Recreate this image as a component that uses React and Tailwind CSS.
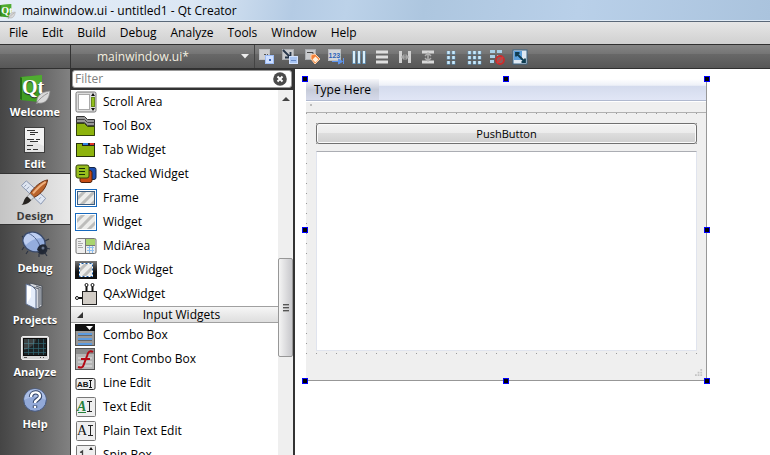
import React from "react";

const TOOLS = ["hlayoutSplit", "signals", "buddy", "tab", "horizontal", "vertical", "hsplit", "vsplit", "form", "grid", "break", "adjust"];
const TOOL_NAMES = ["Edit Widgets", "Edit Signals/Slots", "Edit Buddies", "Edit Tab Order", "Lay Out Horizontally", "Lay Out Vertically", "Horizontal Splitter", "Vertical Splitter", "Form Layout", "Grid Layout", "Break Layout", "Adjust Size"];

function Page({ x, y }) {
  return <rect x={x} y={y} width="9" height="9" fill="#d3d5d8" stroke="#b2b5ba" />;
}

function ToolIcon({ kind }) {
  const shapes = {
    hlayoutSplit: (
      <>
        <rect x=".5" y=".5" width="10" height="10" fill="#cfd0d2" stroke="#bfc1c4" />
        <path d="M7 5.500H5M8.500 5v3" stroke="#555" />
        <rect x="6.500" y="6.500" width="8" height="8" fill="#cfe0ff" stroke="#9dbcf5" />
        <rect x="10" y="10" width="2" height="2" fill="#3862b4" />
      </>
    ),
    signals: (
      <>
        <rect x=".5" y=".5" width="11" height="10" fill="#c8cacd" stroke="#aaadb1" />
        <path d="M1 1l7 7M8.500 3v5.500H3" stroke="#26364a" strokeWidth="1.800" fill="none" />
        <rect x="7.500" y="7.500" width="8" height="7" fill="#a9c5f2" stroke="#d2e2ff" />
        <path d="M9 11.500h5" stroke="#6589c8" />
      </>
    ),
    buddy: (
      <>
        <rect x=".5" y=".5" width="10" height="10" fill="#c8cacd" stroke="#aaadb1" />
        <path d="M2 3.500h6V7" stroke="#444" fill="none" />
        <path d="M6 6l4-1 5 5-5 5-4-5z" fill="#f58239" stroke="#ffd0a8" />
        <path d="M10.500 7.500l3 3-3 3-3-3z" fill="#fff1dc" />
      </>
    ),
    tab: (
      <>
        <rect x=".5" y=".5" width="12" height="11" fill="#d3d6da" stroke="#b9bcc1" />
        <text x=".5" y="9" fontSize="7" fontWeight="700" fill="#2b62b8" fontFamily="Liberation Sans, sans-serif">123</text>
        <path d="M4 12.500h7M10.500 10l4 2.500-4 2.500zM15.500 9v6" stroke="#5f94ea" fill="#5f94ea" />
      </>
    ),
    horizontal: (
      <>
        <path d="M3 2v13M8 2v13M13 2v13" stroke="#6ba4cf" strokeWidth="3" />
        <path d="M3 2v12M8 2v12M13 2v12" stroke="#d8eefa" strokeWidth="2" />
      </>
    ),
    vertical: <path d="M2 3h12M2 8h12M2 13h12" stroke="#dedede" strokeWidth="3" />,
    hsplit: (
      <>
        <path d="M3.500 2v12M12.500 2v12" stroke="#d0d0d0" strokeWidth="3" />
        <path d="M5 8h6M7.500 5.500L5 8l2.500 2.500M8.500 5.500L11 8l-2.500 2.500" stroke="#a5a5a5" fill="none" strokeWidth="1.500" />
      </>
    ),
    vsplit: (
      <>
        <path d="M2 3h12M2 13h12" stroke="#d8d8d8" strokeWidth="3" />
        <path d="M8 5v6M5 7l3-3 3 3M5 9l3 3 3-3" stroke="#b0b0b0" fill="none" strokeWidth="1.500" />
      </>
    ),
    form: (
      <>
        <path d="M5.500 2v3.500M5.500 7v3.500M5.500 12v3.500M10.500 2v3.500M10.500 7v3.500M10.500 12v3.500" stroke="#5f9ac6" strokeWidth="3.500" />
        <path d="M5.500 2v3M5.500 7v3M5.500 12v3M10.500 2v3M10.500 7v3M10.500 12v3" stroke="#cbe8f8" strokeWidth="2.500" />
      </>
    ),
    grid: (
      <>
        <path d="M3.500 2v3.500M3.500 7v3.500M3.500 12v3.500M8.500 2v3.500M8.500 7v3.500M8.500 12v3.500M13.500 2v3.500M13.500 7v3.500M13.500 12v3.500" stroke="#5f9ac6" strokeWidth="3.500" />
        <path d="M3.500 2v3M3.500 7v3M3.500 12v3M8.500 2v3M8.500 7v3M8.500 12v3M13.500 2v3M13.500 7v3M13.500 12v3" stroke="#cbe8f8" strokeWidth="2.500" />
      </>
    ),
    break: (
      <>
        <path d="M1 2.500h5M8 2.500h5M1 7.500h5M8 7.500h3M1 12.500h4" stroke="#a9d0e8" strokeWidth="3" />
        <circle cx="11" cy="11" r="4" fill="#8a6060" stroke="#c92c2c" strokeWidth="1.800" />
        <path d="M8 14l6-6" stroke="#d23c3c" strokeWidth="1.800" />
      </>
    ),
    adjust: (
      <>
        <rect x="1" y="1" width="14" height="14" fill="#dfe9f3" stroke="#3d6786" />
        <path d="M2 2h8v9H2z" fill="#5ba0dc" />
        <path d="M4 4l9 9M4 7.500V4h3.500M13 9.500V13H9.500" stroke="#0f3c50" strokeWidth="1.800" fill="none" />
      </>
    ),
  };
  return (
    <svg viewBox="0 0 16 16" className="size-4" aria-hidden="true">
      {shapes[kind]}
    </svg>
  );
}

function QtLogo() {
  return (
    <>
      <path d="M3 5l22-2v26l-3 1-19-2z" fill="#3f9e24" />
      <path d="M3 5l2 1v22l-2-1z" fill="#246b15" />
      <path d="M5 5l20-2v14L5 20z" fill="#5cb83a" opacity=".55" />
      <text x="5" y="22" fontSize="20" fontWeight="700" fill="#fff" fontFamily="Liberation Serif, serif">Qt</text>
      <path d="M20 31c-1-7 4-11 13-12-1 8-4 13-12 12l-2 1z" fill="#d9d9d9" stroke="#8c8c8c" strokeWidth=".7" />
      <path d="M19 32c3-5 7-8 12-11" stroke="#888" fill="none" strokeWidth=".8" />
    </>
  );
}

function ModeIcon({ kind }) {
  const shapes = {
    Welcome: <QtLogo />,
    Edit: (
      <>
        <rect x="7.500" y="3.500" width="20" height="25" fill="#f3f3f3" stroke="#3e3e3e" />
        <path d="M8 28V14l19 8v6z" fill="#dcdcdc" opacity=".6" />
        <path d="M10 6.500h8M13 8.500h8M13 10.500h5M10 15.500h7M19 15.500h4M13 17.500h8M10 21.500h6M10 25.500h4M16 25.500h5" stroke="#333" />
      </>
    ),
    Design: (
      <>
        <path d="M4 9l5-5 20 18-5 6z" fill="#dfe6f2" stroke="#8795b0" />
        <path d="M9 8l-2 2M12 10l-3 3M15 13l-2 2M18 16l-2 2M21 18l-3 3M24 21l-2 2" stroke="#8f9cb3" />
        <path d="M31 3c-6 1-14 7-18 14l4 4C24 18 30 11 31 3z" fill="#b9622a" stroke="#673014" />
        <path d="M29 5c-5 3-9 7-13 12" stroke="#eeb07e" strokeWidth="2" fill="none" />
        <path d="M13 17l4 4-3 3-4-4z" fill="#d7d9dc" stroke="#777" strokeWidth=".7" />
        <path d="M10 20l4 4c-3 4-6 4-10 5 3-2 2-7 6-9z" fill="#26221f" />
      </>
    ),
    Debug: (
      <>
        <path d="M7 19l-2 3M11 23l-2 3M28 13l4-2M29 20l4 1M7 10L5 8M28 25l2 3M22 26v3" stroke="#2d3443" strokeWidth="1.200" />
        <ellipse cx="25" cy="21" rx="5.500" ry="5.500" fill="#252c39" />
        <ellipse cx="17" cy="14" rx="11.500" ry="9.500" transform="rotate(25 17 14)" fill="#94addd" stroke="#3a4a6a" strokeWidth="1.300" />
        <path d="M7 10c4-7 12-7 18 0-7 0-12 3-16 7-2-2-3-5-2-7z" fill="#cbdaf7" opacity=".75" />
        <path d="M11 5c7 3 11 9 13 16" stroke="#536894" fill="none" />
        <path d="M20 22c1-5 5-7 9-5v5l-4 4z" fill="#202734" />
        <circle cx="26" cy="20" r="1.500" fill="#68758d" />
      </>
    ),
    Projects: (
      <>
        <path d="M13 3l12 3v20l-5 3-7-3z" fill="#d4d6db" stroke="#4b5059" />
        <path d="M16 7l6 2v18M19 6l5 2v17" fill="none" stroke="#636a76" strokeWidth="1.200" />
        <path d="M9 4l6 2 4 4v19L9 24z" fill="#e5edfb" stroke="#5c6c8b" />
        <path d="M10 6l4 1v10l-4 6z" fill="#fff" />
      </>
    ),
    Analyze: (
      <>
        <rect x="4.500" y="4.500" width="27" height="23" rx="1.500" fill="#d6d6d6" stroke="#eee" />
        <rect x="6.500" y="6.500" width="23" height="17" fill="#1a2022" stroke="#090909" />
        <path d="M11.500 7v16M16.500 7v16M21.500 7v16M26.500 7v16M7 11.500h22M7 16.500h22M7 20.500h22" stroke="#316772" strokeWidth=".7" />
        <path d="M7 7h12c-1 6-6 9-12 11z" fill="#fff" opacity=".15" />
        <path d="M23 25.500h1M26 25.500h1M7 25.500h3" stroke="#555" />
      </>
    ),
    Help: (
      <>
        <circle cx="18" cy="16" r="11.300" fill="#92a9d8" stroke="#47597f" />
        <path d="M7 16a11 11 0 0 1 22 0c-8-4-14-4-22 0z" fill="#b9c9ec" opacity=".65" />
        <path d="M14 13c0-6 9-6 9-1 0 4-5 3-5 7M18 21.500v2.500" stroke="#334568" strokeWidth="4.400" fill="none" />
        <path d="M14 13c0-6 9-6 9-1 0 4-5 3-5 7M18 22v2" stroke="#fff" strokeWidth="2.400" fill="none" />
      </>
    ),
  };
  return (
    <svg viewBox="0 0 36 32" className="h-8 w-9" aria-hidden="true">
      {shapes[kind]}
    </svg>
  );
}

const MODES = ["Welcome", "Edit", "Design", "Debug", "Projects", "Analyze", "Help"];

function Stripes({ x, y, w, h }) {
  return (
    <svg x={x} y={y} width={w} height={h} viewBox={`0 0 ${w} ${h}`}>
      <rect width={w} height={h} fill="#ededeb" />
      <path d="M-4 10L8-2M-1 17L18-2M8 18L26 0" stroke="#bdbdbb" strokeWidth="3" />
    </svg>
  );
}

function WidgetIcon({ kind }) {
  const shapes = {
    "Scroll Area": (
      <>
        <rect x="1" y="1" width="20" height="20" rx="1.500" fill="#dedede" stroke="#777" />
        <rect x="3.500" y="3.500" width="11" height="15" fill="#fff" stroke="#aaa" />
        <path d="M18 2l2 3h-4zM18 20l2-3h-4z" fill="#111" />
        <rect x="16.500" y="6.500" width="3" height="9" fill="#92bf1d" stroke="#668a18" />
      </>
    ),
    "Tool Box": (
      <>
        <path d="M1.500 1.500h8l3 3h7v16h-18z" fill="#999" stroke="#333" />
        <path d="M1.500 4.500h8l3 3h7M1.500 7.500h8l3 3h7" stroke="#444" fill="none" />
        <path d="M1.500 8.500h8l3 3h7v9h-18z" fill="#8db30d" stroke="#33430b" />
      </>
    ),
    "Tab Widget": (
      <>
        <rect x="1.500" y="4.500" width="18" height="13" fill="#8db30d" stroke="#26330a" />
        <path d="M7 4h13v3H7z" fill="#222" />
        <path d="M8 4h5v2H8z" fill="#2f86e4" />
        <path d="M15 4h4v2h-4z" fill="#e23529" />
      </>
    ),
    "Stacked Widget": (
      <>
        <rect x="9" y="4.500" width="12" height="12" rx="2" fill="#1c4eb0" stroke="#172646" />
        <rect x="5" y="7.500" width="12" height="12" rx="2" fill="#c84c13" stroke="#4b210d" />
        <rect x="1" y="2" width="13" height="13" rx="2" fill="#97bd1d" stroke="#34430d" />
        <path d="M4 5.500h6M4 8.500h6M4 11.500h6" stroke="#172f08" />
      </>
    ),
    Frame: (
      <>
        <rect x=".5" y="2.500" width="21" height="17" fill="#fff" stroke="#1769bd" />
        <Stripes x={3} y={5} w={16} h={12} />
        <rect x="2.500" y="4.500" width="17" height="13" fill="none" stroke="#3d5e81" />
      </>
    ),
    Widget: (
      <>
        <rect x=".5" y="2.500" width="21" height="17" fill="#fff" stroke="#1769bd" />
        <Stripes x={2} y={4} w={18} h={14} />
      </>
    ),
    MdiArea: (
      <>
        <rect x="1" y="3.500" width="20" height="15" rx="1.500" fill="#eee" stroke="#777" />
        <path d="M10.500 4v14M11 10.500h9" stroke="#777" />
        <rect x="11" y="4" width="9" height="6" fill="#a9d46e" />
        <path d="M3 6.500h3M3 8.500h5M3 10.500h4M3 12.500h5" stroke="#aaa" />
        <path d="M12 12.500h7M12 15.500h7M14.500 11v7M17.500 11v7" stroke="#8dbff0" />
      </>
    ),
    "Dock Widget": (
      <>
        <defs>
          <linearGradient id="dock" x2="0" y2="1"><stop stopColor="#777" /><stop offset=".6" stopColor="#111" /></linearGradient>
        </defs>
        <rect y="2" width="22" height="18" fill="url(#dock)" />
        <Stripes x={5} y={5} w={12} h={12} />
        <rect x="4.500" y="4.500" width="13" height="13" fill="none" stroke="#175aa5" />
        <rect x="4.500" y="4.500" width="13" height="13" fill="none" stroke="#fff" strokeDasharray="2 2" />
      </>
    ),
    QAxWidget: (
      <>
        <rect x="7.500" y="8.500" width="14" height="13" fill="#d2cdc6" stroke="#222" />
        <path d="M11.500 3v5M17.500 3v5M3 15h4" stroke="#111" strokeWidth="2" />
        <circle cx="11.500" cy="2" r="1.500" fill="#fff" stroke="#111" />
        <circle cx="17.500" cy="2" r="1.500" fill="#fff" stroke="#111" />
        <circle cx="2" cy="15" r="1.500" fill="#fff" stroke="#111" />
      </>
    ),
    "Combo Box": (
      <>
        <rect x=".5" y=".5" width="19" height="21" fill="#999" stroke="#555" />
        <path d="M0 0h20v7H0z" fill="#111" />
        <path d="M11 2h7l-3.500 4z" fill="#fff" />
        <path d="M3 10h14M3 15h14M3 20h14" stroke="#5c9be0" strokeWidth="2" />
        <path d="M3 11.500h14M3 16.500h14" stroke="#666" />
      </>
    ),
    "Font Combo Box": (
      <>
        <rect x=".5" y=".5" width="19" height="21" fill="#b4b4b4" stroke="#555" />
        <path d="M1 1h18v5H1z" fill="#8a8a8a" />
        <path d="M3 10h14M3 14h14M3 18h14" stroke="#ccc" strokeWidth="2" />
        <path d="M18 4c-3-2-5 0-6 4L9 16c-1 4-3 4-6 3M6 11h9" stroke="#b30914" strokeWidth="2" fill="none" />
      </>
    ),
    "Line Edit": (
      <>
        <rect x="1" y="6.500" width="19" height="11" rx="1.500" fill="#eee" stroke="#333" />
        <text x="2" y="15" fontSize="8" fontWeight="700" fill="#111" fontFamily="Liberation Sans, sans-serif">AB</text>
        <path d="M14 8.500h3M14 15.500h3M15.500 9v6" stroke="#111" />
      </>
    ),
    "Text Edit": (
      <>
        <rect x="1.500" y="1.500" width="19" height="19" rx="1" fill="#eee" stroke="#777" />
        <text x="2" y="15" fontSize="14" fontStyle="italic" fontWeight="700" fill="#24803a" fontFamily="Liberation Serif, serif">A</text>
        <path d="M3 16.500h8" stroke="#24803a" />
        <path d="M12 5.500h5M12 15.500h5M14.500 6v9" stroke="#222" />
      </>
    ),
    "Plain Text Edit": (
      <>
        <rect x="1.500" y="1.500" width="19" height="19" rx="1" fill="#eee" stroke="#777" />
        <text x="2" y="15" fontSize="14" fill="#111" fontFamily="Liberation Serif, serif">A</text>
        <path d="M13 5.500h5M13 15.500h5M15.500 6v9" stroke="#222" />
      </>
    ),
    "Spin Box": (
      <>
        <rect x="1.500" y="1.500" width="19" height="19" rx="1" fill="#eee" stroke="#777" />
        <path d="M5 8.500l2.500-1.500v8M5 15h5" stroke="#444" strokeWidth="1.300" fill="none" />
        <path d="M16 3l2 3h-4zM16 18l2-3h-4z" fill="#111" />
      </>
    ),
  };
  return (
    <svg viewBox="0 0 22 22" className="size-[22px] shrink-0" aria-hidden="true">
      {shapes[kind]}
    </svg>
  );
}

const CONTAINERS = ["Scroll Area", "Tool Box", "Tab Widget", "Stacked Widget", "Frame", "Widget", "MdiArea", "Dock Widget", "QAxWidget"];
const INPUTS = ["Combo Box", "Font Combo Box", "Line Edit", "Text Edit", "Plain Text Edit", "Spin Box"];

function WidgetRows({ items }) {
  return (
    <ul>
      {items.map((name) => (
        <li key={name} className="flex h-6 items-center gap-1.5 pl-1">
          <WidgetIcon kind={name} />
          <span className="whitespace-nowrap">{name}</span>
        </li>
      ))}
    </ul>
  );
}

function Handle({ className }) {
  return <span className={`absolute size-1.5 -translate-1/2 border border-[#0000ff] bg-black ${className}`} />;
}

function TitleBar() {
  return (
    <header className="flex h-[22px] shrink-0 items-center gap-1.5 border-b border-[#5a6878] bg-[linear-gradient(100deg,#e4edf7_0%,#dbe7f4_25%,#b4cbe4_38%,#bcd2e9_45%,#adc6df_55%,#b9d0e9_75%,#aac3dd_100%)] shadow-[inset_0_-1px_#dfeaf5]">
      <svg viewBox="3 1 31 32" className="size-4" aria-hidden="true"><QtLogo /></svg>
      <h1>mainwindow.ui - untitled1 - Qt Creator</h1>
    </header>
  );
}

function MenuBar() {
  return (
    <nav className="flex h-[22px] shrink-0 items-center gap-3.5 bg-linear-to-b from-[#e6e6e6] to-[#d0d0d0] pl-[9px]">
      {["File", "Edit", "Build", "Debug", "Analyze", "Tools", "Window", "Help"].map((m) => (
        <button key={m}>{m}</button>
      ))}
    </nav>
  );
}

function ToolBar() {
  return (
    <div className="flex h-[25px] shrink-0 border-y border-[#303030] bg-[linear-gradient(#848484,#747474_40%,#686868_40%,#575757)]">
      <div className="w-[71px] shrink-0 border-r border-[#333]" />
      <button className="flex w-[184px] shrink-0 items-center justify-between border-r border-[#444] pr-[5px] pl-[26px] text-[#f3efe0]">
        mainwindow.ui*
        <svg viewBox="0 0 8 5" className="h-[5px] w-2" aria-hidden="true"><path d="M0 0h8L4 4.500z" fill="#eee" /></svg>
      </button>
      <div className="flex items-center">
        {TOOLS.map((t, i) => (
          <button key={t} aria-label={TOOL_NAMES[i]} className="flex w-[23px] justify-center">
            <ToolIcon kind={t} />
          </button>
        ))}
      </div>
    </div>
  );
}

function ModeBar() {
  return (
    <aside className="flex w-[71px] shrink-0 flex-col border-r border-[#333] bg-linear-to-r from-[#454545] to-[#818181]">
      {MODES.map((m) => (
        <button
          key={m}
          className={
            m === "Design"
              ? "flex h-[52px] shrink-0 flex-col items-center border-y border-[#333] bg-linear-to-r from-[#c4c4c4] to-[#e8e8e8] pt-[3px] text-[11px] leading-4 font-bold text-[#3c3c3c]"
              : "flex h-[52px] shrink-0 flex-col items-center pt-[3px] text-[11px] leading-4 font-bold text-white [text-shadow:0_1px_1px_#222]"
          }
        >
          <ModeIcon kind={m} />
          {m}
        </button>
      ))}
    </aside>
  );
}

function WidgetBox() {
  return (
    <section className="flex w-56 shrink-0 flex-col border-r-2 border-[#333] bg-white">
      <div className="flex h-5 shrink-0 bg-[#333] p-px">
        <label className="flex min-w-0 flex-1 items-center rounded-[3px] border border-[#999] bg-white pr-1 pl-0.5">
          <span className="sr-only">Filter</span>
          <input placeholder="Filter" className="h-4 min-w-0 flex-1 bg-transparent leading-4 outline-none placeholder:text-[#808080]" />
          <svg viewBox="0 0 14 14" className="size-3.5" aria-hidden="true">
            <circle cx="7" cy="7" r="6.800" fill="#4b4b4b" />
            <path d="M4.500 4.500l5 5M9.500 4.500l-5 5" stroke="#fff" strokeWidth="2" />
          </svg>
        </label>
      </div>
      <div className="flex min-h-0 flex-1 border-t border-[#333]">
        <div className="min-w-0 flex-1 overflow-hidden">
          <WidgetRows items={CONTAINERS} />
          <h2 className="flex h-[17px] items-center border-y border-[#a0a0a0] bg-linear-to-b from-[#f6f6f6] to-[#dedede] pl-1.5">
            <svg viewBox="0 0 6 6" className="size-1.5" aria-hidden="true"><path d="M6 0v6H0z" fill="#333" /></svg>
            <span className="flex-1 pl-0.5 text-center">Input Widgets</span>
          </h2>
          <WidgetRows items={INPUTS} />
        </div>
        <div className="flex w-[15px] flex-col items-center bg-[#efefef]">
          <div className="flex h-[168px] w-full shrink-0 justify-center pt-[7px]">
            <svg viewBox="0 0 8 4" className="h-1 w-2" aria-hidden="true"><path d="M4 0l4 4H0z" fill="#444" /></svg>
          </div>
          <div className="flex h-[99px] w-full shrink-0 items-center justify-center rounded-xs border border-[#979797] bg-linear-to-r from-[#f4f4f4] to-[#c8c8cc]">
            <div className="h-2 w-1.5 bg-[repeating-linear-gradient(#555_0_1px,#aaa_1px_2px,transparent_2px_3px)]" />
          </div>
        </div>
      </div>
    </section>
  );
}

function FormEditor() {
  return (
    <main className="min-w-0 flex-1 bg-white p-2.5">
      <div className="relative flex h-[302px] w-[402px] flex-col pl-px">
        <div className="flex min-h-0 flex-1 flex-col border-r border-b border-[#979797] bg-[#efefef]">
          <div className="flex h-[22px] shrink-0 border-b border-[#b0b9cf] bg-[linear-gradient(#fff,#eef1f8_30%,#d4dbed_34%,#e1e6f6)]">
            <button className="bg-linear-to-b from-[#f6f7fa] via-[#c6cbd9] to-[#d6daea] px-2">Type Here</button>
          </div>
          <div className="h-3 shrink-0 border-t border-b border-t-white border-b-[#b0b0b0] pt-0.5 pl-1">
            <div className="size-0.5 bg-[#bbb]" />
          </div>
          <div className="flex h-[241px] flex-col gap-[7px] bg-[linear-gradient(90deg,transparent_1px,#efefef_1px),linear-gradient(#999_1px,#efefef_1px)] bg-size-[10px_10px] pt-2.5 pr-[9px] pl-2.5">
            <button className="h-[21px] shrink-0 rounded-[3px] border border-[#707070] bg-[linear-gradient(#f2f2f2,#ebebeb_50%,#dddddd_50%,#cfcfcf)] text-[11px] leading-4 shadow-[inset_0_0_0_1px_#fafafa]">
              PushButton
            </button>
            <textarea aria-label="Text" className="block h-[200px] w-full shrink-0 resize-none border border-[#e0e4ee] border-t-[#abadb3] bg-white outline-none" />
          </div>
          <div className="flex flex-1 items-end justify-end p-[3px]">
            <svg viewBox="0 0 9 9" className="size-2" aria-hidden="true">
              <path d="M6 1h2M3 4h2M6 4h2M0 7h2M3 7h2M6 7h2" stroke="#c4c4c4" strokeWidth="2" />
            </svg>
          </div>
        </div>
        <Handle className="top-0 left-0" />
        <Handle className="top-0 left-1/2" />
        <Handle className="top-0 left-full" />
        <Handle className="top-1/2 left-0" />
        <Handle className="top-1/2 left-full" />
        <Handle className="top-full left-0" />
        <Handle className="top-full left-1/2" />
        <Handle className="top-full left-full" />
      </div>
    </main>
  );
}

export default function App() {
  return (
    <div className="flex h-screen flex-col overflow-hidden bg-white font-['Open_Sans','Noto_Sans',sans-serif] text-[12px] leading-4 text-black">
      <TitleBar />
      <MenuBar />
      <ToolBar />
      <div className="flex min-h-0 flex-1">
        <ModeBar />
        <WidgetBox />
        <FormEditor />
      </div>
    </div>
  );
}
